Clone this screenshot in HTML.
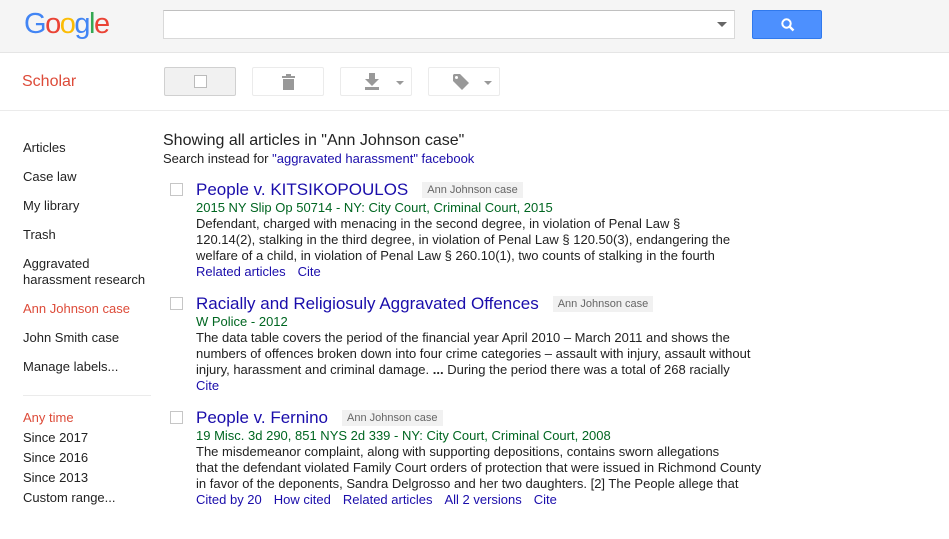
<!DOCTYPE html>
<html><head><meta charset="utf-8"><style>
*{margin:0;padding:0;box-sizing:border-box}
body{width:949px;height:539px;overflow:hidden;font-family:"Liberation Sans",Arial,sans-serif;background:#fff;color:#222;position:relative}
.hdr{position:absolute;left:0;top:0;width:949px;height:53px;background:#f5f5f5;border-bottom:1px solid #e5e5e5}
.abs{position:absolute}
.logo{left:24px;top:8px;font-size:29px;letter-spacing:-1.5px}
.search{left:163px;top:10px;width:572px;height:29px;background:#fff;border:1px solid #d9d9d9;border-top-color:#c0c0c0}
.btn{left:752px;top:10px;width:70px;height:29px;background:#4d90fe;border:1px solid #3079ed;border-radius:2px}
.sub{position:absolute;left:0;top:110px;width:949px;border-top:1px solid #ebebeb}
.tb{position:absolute;top:67px;height:29px;width:72px;border:1px solid #ebebeb;border-radius:2px;background:#fff}
.side{position:absolute;left:23px;font-size:13px;color:#222}
.a{color:#1a0dab}
.g{color:#006621}
.r{position:absolute;left:196px;font-size:13px;line-height:16px}
.t{font-size:17px;color:#1a0dab;line-height:20px}
.lab{display:inline-block;background:#f1f1f1;color:#666;font-size:11px;padding:1px 5px;margin-left:14px;vertical-align:2px;line-height:14px}
.cb{position:absolute;left:170px;width:13px;height:13px;border:1px solid #c6c6c6;background:#fff}
.lk a{color:#1a0dab;margin-right:12px;text-decoration:none}
</style></head><body>
<div class="hdr"></div>
<div class="abs logo"><span style="color:#4285f4">G</span><span style="color:#ea4335">o</span><span style="color:#fbbc05">o</span><span style="color:#4285f4">g</span><span style="color:#34a853">l</span><span style="color:#ea4335">e</span></div>
<div class="abs search"><div class="abs" style="right:7px;top:11px;border-left:5px solid transparent;border-right:5px solid transparent;border-top:5px solid #666"></div></div>
<div class="abs btn"><svg class="abs" style="left:27px;top:6px" width="16" height="16" viewBox="0 0 16 16"><circle cx="6.5" cy="6.5" r="4.2" fill="none" stroke="#fff" stroke-width="2"/><path d="M9.5 9.5L13.5 13.5" stroke="#fff" stroke-width="2.4"/></svg></div>
<div class="abs" style="left:22px;top:73px;font-size:16px;color:#dd4b39">Scholar</div>
<div class="tb" style="left:164px;background:#f1f1f1;border-color:#d0d0d0"><div class="abs" style="left:29px;top:7px;width:13px;height:13px;border:1px solid #bbb;background:#fff"></div></div>
<div class="tb" style="left:252px"><svg class="abs" style="left:29px;top:6px" width="13" height="16"><rect x="0" y="2" width="13" height="2" fill="#999"/><rect x="4" y="0" width="5" height="2" fill="#999"/><rect x="1" y="5" width="11" height="11" fill="#999"/></svg></div>
<div class="tb" style="left:340px"><svg class="abs" style="left:24px;top:5px" width="14" height="17"><path d="M4 0h6v6h4l-7 7-7-7h4z" fill="#999"/><rect x="0" y="14" width="14" height="3" fill="#999"/></svg><div class="abs" style="left:55px;top:13px;border-left:4px solid transparent;border-right:4px solid transparent;border-top:4px solid #999"></div></div>
<div class="tb" style="left:428px"><svg class="abs" style="left:24px;top:6px" width="16" height="16"><path d="M0 1v6l9 9 7-7-9-9H1z" fill="#999"/><circle cx="3.5" cy="3.5" r="1.5" fill="#fff"/></svg><div class="abs" style="left:55px;top:13px;border-left:4px solid transparent;border-right:4px solid transparent;border-top:4px solid #999"></div></div>
<div class="sub"></div>
<div class="side" style="top:140px">Articles</div>
<div class="side" style="top:169px">Case law</div>
<div class="side" style="top:198px">My library</div>
<div class="side" style="top:227px">Trash</div>
<div class="side" style="top:256px;line-height:16px">Aggravated<br>harassment research</div>
<div class="side" style="top:301px;color:#dd4b39">Ann Johnson case</div>
<div class="side" style="top:330px">John Smith case</div>
<div class="side" style="top:359px">Manage labels...</div>
<div class="abs" style="left:23px;top:395px;width:128px;border-top:1px solid #ebebeb"></div>
<div class="side" style="top:410px;color:#dd4b39">Any time</div>
<div class="side" style="top:430px">Since 2017</div>
<div class="side" style="top:450px">Since 2016</div>
<div class="side" style="top:470px">Since 2013</div>
<div class="side" style="top:490px">Custom range...</div>
<div class="abs" style="left:163px;top:132px;font-size:16px">Showing all articles in "Ann Johnson case"</div>
<div class="abs" style="left:163px;top:151px;font-size:13px">Search instead for <span class="a">"aggravated harassment" facebook</span></div>
<div class="cb" style="top:183px"></div>
<div class="r" style="top:180px"><div class="t">People v. KITSIKOPOULOS<span class="lab">Ann Johnson case</span></div><div class="g">2015 NY Slip Op 50714 - NY: City Court, Criminal Court, 2015</div><div>Defendant, charged with menacing in the second degree, in violation of Penal Law §<br>120.14(2), stalking in the third degree, in violation of Penal Law § 120.50(3), endangering the<br>welfare of a child, in violation of Penal Law § 260.10(1), two counts of stalking in the fourth</div><div class="lk"><a>Related articles</a><a>Cite</a></div></div>
<div class="cb" style="top:297px"></div>
<div class="r" style="top:294px"><div class="t">Racially and Religiosuly Aggravated Offences<span class="lab">Ann Johnson case</span></div><div class="g">W Police - 2012</div><div>The data table covers the period of the financial year April 2010 – March 2011 and shows the<br>numbers of offences broken down into four crime categories – assault with injury, assault without<br>injury, harassment and criminal damage. <b>...</b> During the period there was a total of 268 racially</div><div class="lk"><a>Cite</a></div></div>
<div class="cb" style="top:411px"></div>
<div class="r" style="top:408px"><div class="t">People v. Fernino<span class="lab">Ann Johnson case</span></div><div class="g">19 Misc. 3d 290, 851 NYS 2d 339 - NY: City Court, Criminal Court, 2008</div><div>The misdemeanor complaint, along with supporting depositions, contains sworn allegations<br>that the defendant violated Family Court orders of protection that were issued in Richmond County<br>in favor of the deponents, Sandra Delgrosso and her two daughters. [2] The People allege that</div><div class="lk"><a>Cited by 20</a><a>How cited</a><a>Related articles</a><a>All 2 versions</a><a>Cite</a></div></div>
</body></html>
